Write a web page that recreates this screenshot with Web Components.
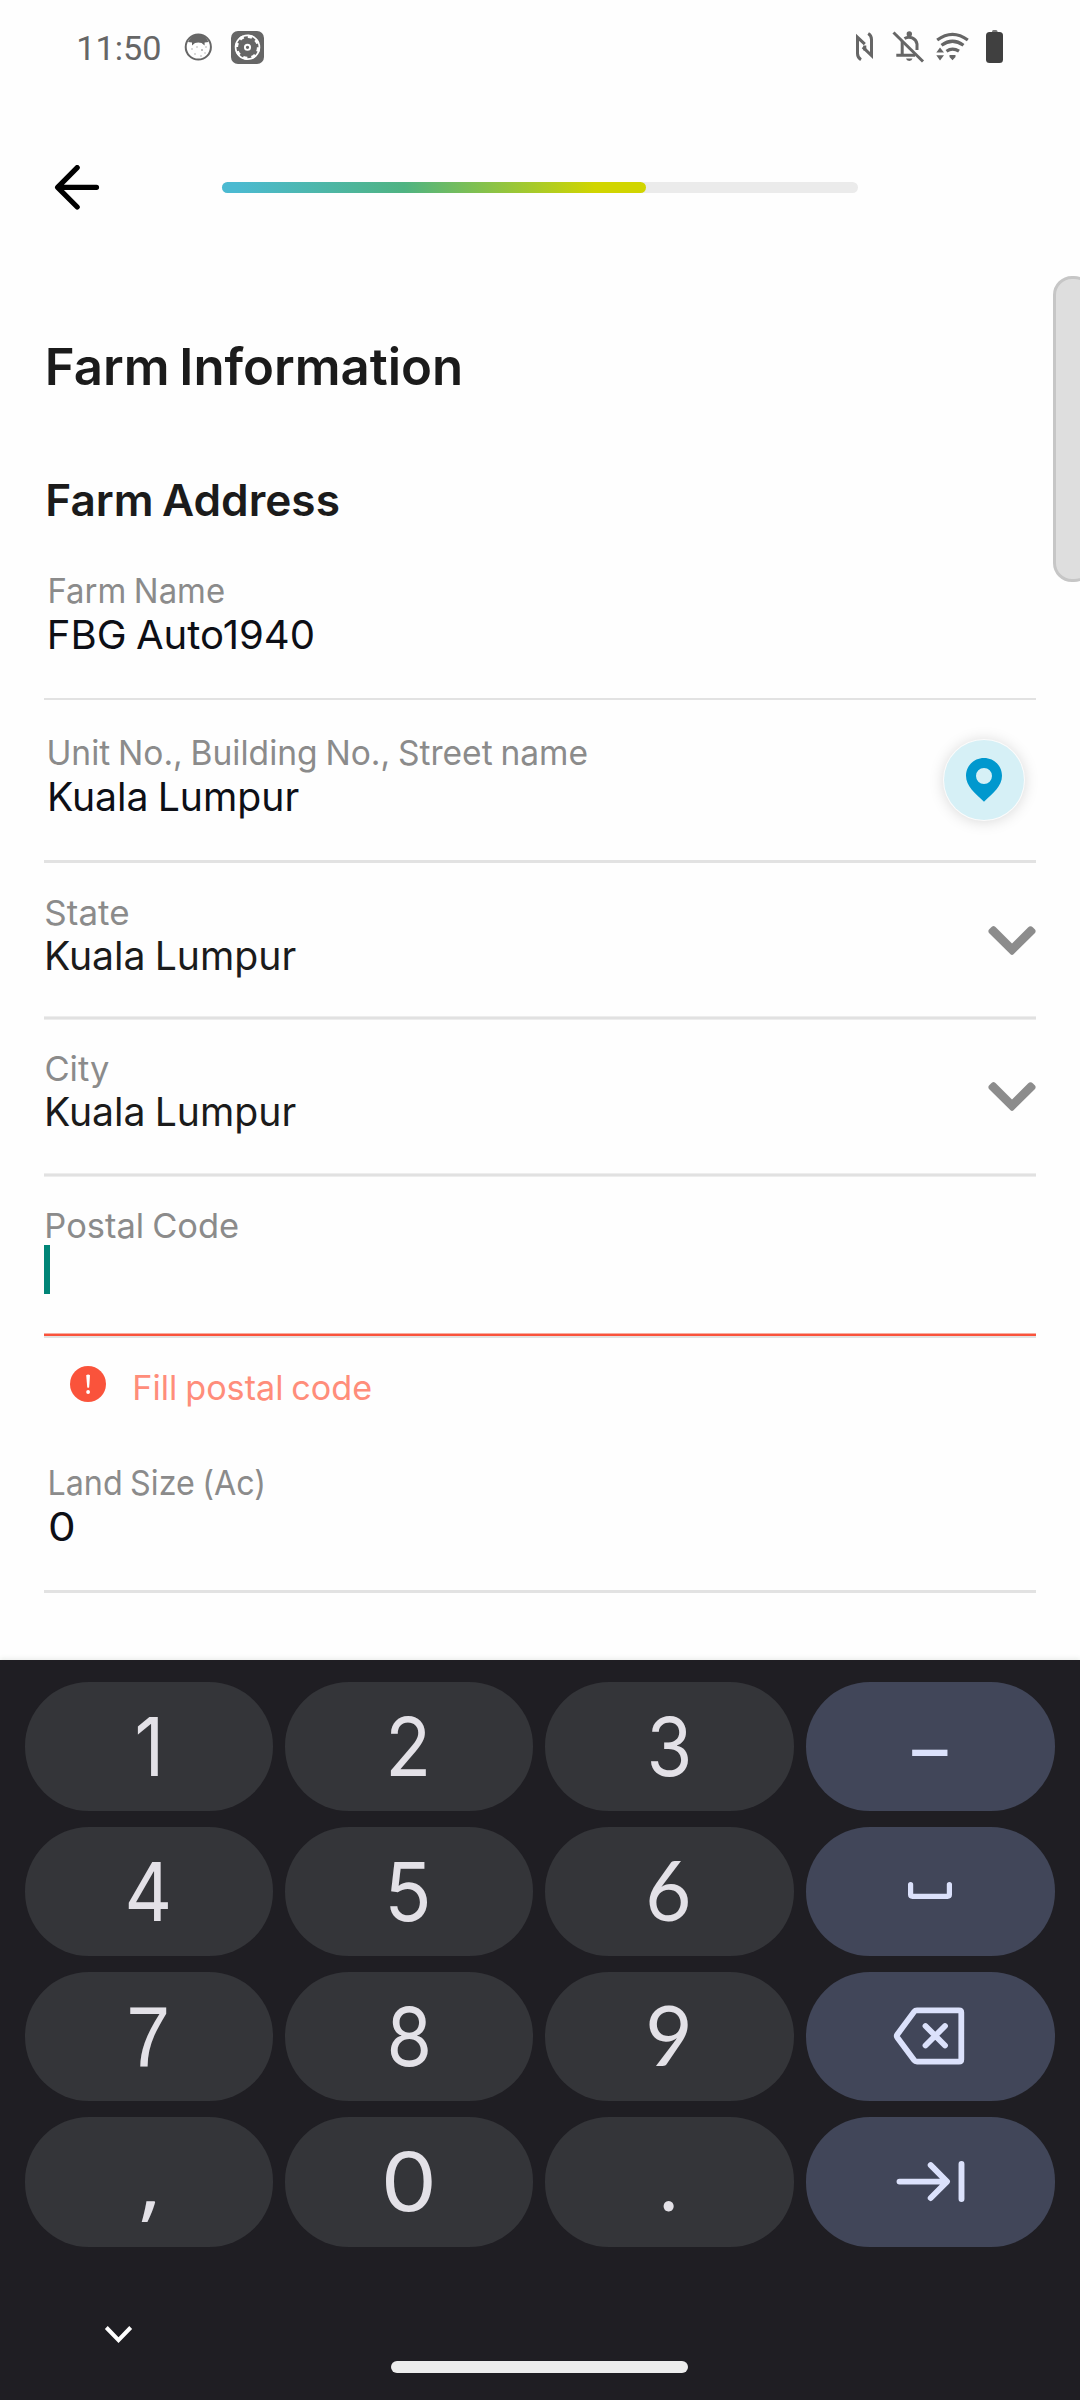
<!DOCTYPE html>
<html lang="en">
<head>
<meta charset="utf-8">
<title>Farm Information</title>
<style>
html,body{margin:0;padding:0;background:#fefefe}
body{width:1080px;height:2400px;overflow:hidden;font-family:Inter,"Noto Sans",sans-serif}
</style>
</head>
<body>
<farm-screen></farm-screen>
<script>
const define=(name,html,init)=>customElements.define(name,class extends HTMLElement{
  connectedCallback(){
    if(this.shadowRoot)return;
    const root=this.attachShadow({mode:'open'});
    const t=document.createElement('template');
    t.innerHTML=typeof html==='function'?html(this):html;
    root.append(t.content.cloneNode(true));
    if(init)init(this,root);
  }
});
const ctx=document.createElement('canvas').getContext('2d');

// Text whose box is its ink width by its cap height, so that rows can align on caps.
define('fit-text',e=>`<style>:host{display:block;flex:none}span{display:block;width:max-content;white-space:pre;transform-origin:0 0}</style><span></span>`,(e,root)=>{
  const s=root.querySelector('span'),text=e.getAttribute('text'),w=+e.getAttribute('w'),cap=+e.getAttribute('cap');
  const fam=`"${e.getAttribute('font')||'Inter'}"`,wt=e.getAttribute('weight')||400,ws=+(e.getAttribute('ws')||-.05);
  // Measured at 1000px, where rounding of the bounds is negligible.
  ctx.font=`${wt} 1000px ${fam}, sans-serif`;
  const r=cap/ctx.measureText('H').actualBoundingBoxAscent,size=r*1000;
  const m=ctx.measureText(text);
  const ink=(m.actualBoundingBoxLeft+m.actualBoundingBoxRight)*r+(text.split(' ').length-1)*ws*size,k=w/ink;
  s.textContent=text;
  e.style.width=w+'px';e.style.height=cap+'px';
  s.style.cssText=`font:${wt} ${size}px/${cap}px ${fam},sans-serif;word-spacing:${ws}em;color:${e.getAttribute('color')||'inherit'}`;
  ctx.font=`${wt} ${size}px ${fam}, sans-serif`;
  const f=ctx.measureText(text),base=(cap+f.fontBoundingBoxAscent-f.fontBoundingBoxDescent)/2;
  s.style.transform=`translate(${m.actualBoundingBoxLeft*r*k}px,${cap-base}px) scaleX(${k})`;
});

define('status-bar',`<style>
:host{display:flex;height:94px;box-sizing:border-box;padding:0 76px 0 79px;align-items:flex-start;color:#666}
fit-text{margin-top:37px}svg{display:block;flex:none}.g{flex:1}
</style>
<fit-text text="11:50" w="81" cap="23.3" font="Roboto" weight="400"></fit-text>
<svg style="margin:32px 0 0 23px" width="30" height="30" viewBox="183 32 30 30"><circle cx="198.3" cy="47" r="12.6" fill="#fff" stroke="#666" stroke-width="2"/><path d="M188 42q3-7 10.300-8q7 1 10.300 8l-4 .5v3l-3-2.500q-3.300-1-6.600 0l-3 2.500v-3z" fill="#666"/><g fill="#aaa"><circle cx="192" cy="49" r=".8"/><circle cx="197" cy="47" r=".8"/><circle cx="202" cy="50" r="1"/><circle cx="206" cy="47" r=".8"/><circle cx="195" cy="54" r=".8"/><circle cx="201" cy="56" r=".8"/><circle cx="205" cy="53" r=".7"/></g></svg>
<svg style="margin:31px 0 0 18px" width="33" height="33" viewBox="0 0 33 33"><rect width="33" height="33" rx="7" fill="#666"/><circle cx="16.500" cy="16.300" r="11.900" fill="none" stroke="#fff" stroke-width="1.700"/><g fill="none" stroke="#fff" stroke-width="3.200" stroke-dasharray="4.400 4.240"><circle cx="16.500" cy="16.300" r="11"/></g><circle cx="16.500" cy="16.300" r="2.600" fill="none" stroke="#fff" stroke-width="1.900"/></svg>
<span class="g"></span>
<svg style="margin-top:30px" width="149" height="36" viewBox="855 30 149 36" fill="none" stroke="#666">
<g stroke-width="3"><path d="M861 59.700Q857.500 57.500 857.500 53.500V37.300L864.800 44.200M864.800 50.500V45.500"/><path d="M868.200 33.500Q871.500 35.500 871.500 39.500V55.500L862.800 47.200"/></g>
<g><path d="M902.200 41V54M896.300 55.300H915" stroke-width="3"/><path d="M904.500 38.500A8.200 8.200 0 0 1 917 44V50" stroke-width="3"/><circle cx="909.300" cy="34" r="2.700" fill="#666" stroke="none"/><path d="M906 58.500H912.500A3.300 3 0 0 1 906 58.500Z" fill="#666" stroke="none"/><path d="M893.500 32.500L923 61.500" stroke-width="3"/></g>
<g stroke-width="3.200"><path d="M937.200 40Q952.500 28.700 967.800 40M941.500 45.300Q952.500 37.200 963.500 45.300M946.500 51.200Q952.500 47 959 51.200"/></g><path d="M949.500 55H955.500V57L952.500 60.300L949.500 57ZM936.300 52.500L940 47.500L944 52.500ZM936.300 55.300H944L940 60.500Z" fill="#666" stroke="none"/>
<path d="M992 33V31.500Q992 30 993.500 30H996Q997.500 30 997.500 31.500V33Z" fill="#777" stroke="none"/><rect x="986" y="32" width="17" height="31" rx="3.500" fill="#404040" stroke="none"/></svg>`);

define('top-bar',`<style>
:host{display:flex;height:154px;box-sizing:border-box;padding:71px 0 0 54px}
svg{display:block}.t{margin:17px 0 0 122px;width:636px;height:11px;border-radius:6px;background:#ebebeb}
.f{width:424px;height:11px;border-radius:6px;background:linear-gradient(90deg,#4bbad1 3%,#4fb382 43%,#d1d500 88%)}
</style><svg width="46" height="45" viewBox="0 0 46 45" fill="none" stroke="#000" stroke-width="5.200" stroke-linecap="round" stroke-linejoin="round"><path d="M23.200 2.600L3.600 22.300L23.200 42M4 22.300H42.500"/></svg>
<div class="t"><div class="f"></div></div>`);

define('form-field',e=>{const g=n=>e.getAttribute(n);return `<style>
:host{display:flex;flex-direction:column;box-sizing:border-box;height:${g('h')}px}
.r{display:flex;flex:1}.c{flex:1;padding-top:${g('pad')}px}
.v{margin-top:${g('gap')}px}
.line{flex:none;height:${g('lh')}px;background:${g('line')||'#e2e2e2'}}
</style><div class="r"><div class="c"><fit-text style="margin-left:${g('li')}px" text="${g('label')}" w="${g('lw')}" cap="25" color="#8b8b8b"></fit-text>
<div class="v">${g('value')?`<fit-text style="margin-left:${g('vi')}px" text="${g('value')}" w="${g('vw')}" cap="29" color="${g('color')||'#0d0f16'}"></fit-text>`:'<slot></slot>'}</div></div><slot name="icon"></slot></div><div class="line"></div>`});

define('text-caret','<style>:host{display:block;width:6px;height:49px;background:#018577}</style>');
define('map-pin',`<style>:host{display:flex;justify-content:center;width:80px;height:80px;margin:40px 12px 0 0;border-radius:50%;background:#d6f0f6;box-shadow:0 0 0 1px #fbfbfb,0 1px 15px rgba(0,0,0,.17)}svg{margin-top:18px}</style><svg width="36" height="44" viewBox="0 0 36 44"><path fill="#0098ce" fill-rule="evenodd" d="M18 0C8 0 0 7.800 0 17.800C0 28 9 35.500 18 43.700C27 35.500 36 28 36 17.800C36 7.800 28 0 18 0ZM18 10A8 8 0 1 1 18 26A8 8 0 1 1 18 10Z"/></svg>`);
define('drop-chevron',`<style>:host{display:block}svg{display:block}</style><svg width="48" height="30" viewBox="988 926 48 30"><path d="M993.500 926Q995 926.300 996 927.500L1012 943.500L1028 927.500Q1030.500 925 1033 927.500L1035 929.500Q1036.500 931.500 1034.500 933.500L1013.500 954.300Q1012 955.700 1010.500 954.300L989.500 933.500Q987.500 931.500 989 929.500L991 927.500Q992 926.200 993.500 926Z" fill="#8c8c8c"/></svg>`);

define('error-note',`<style>:host{display:flex;height:92px;padding:28px 0 0 26px;box-sizing:border-box}svg{display:block}fit-text{margin:9px 0 0 28.700px}</style>
<svg width="36" height="36" viewBox="0 0 36 36"><circle cx="18" cy="18" r="18" fill="#fa533b"/><path d="M16.200 9.300Q18.200 7.500 20 9.300L19.200 21.200Q18.200 22.500 17.200 21.200Z" fill="#fff"/><circle cx="18.100" cy="26" r="1.900" fill="#fff"/></svg>
<fit-text text="Fill postal code" w="236" cap="25" color="#ff8d7a" weight="370"></fit-text>`);

define('num-key',e=>{const g=n=>e.getAttribute(n);return `<style>
:host{display:flex;align-items:center;justify-content:center;border-radius:64px;background:#343539;color:#e3e1e7}
:host([alt]){background:#414659;color:#dbe1fb}
</style>${g('text')?`<fit-text text="${g('text')}" w="${g('w')}" cap="${g('cap')||60}" font="${g('font')||'Inter'}" style="margin-top:${g('drop')||-2}px;margin-right:1px"></fit-text>`:'<slot></slot>'}`});

define('num-pad',`<style>
:host{display:block;height:740px;box-sizing:border-box;padding:22px 25px 0;background:#1f1e23;box-shadow:0 -1px 5px rgba(60,80,60,.12)}
.k{display:grid;grid-template:129px 129px 129px 130px/248px 248px 249px 249px;gap:16px 12px}
.n{display:flex;padding-top:79px}.n svg{margin-left:79px}.pill{margin:35px 0 0 258px;width:297px;height:12px;border-radius:6px;background:#ededed}
svg{display:block;fill:none;stroke:#dbe1fb;stroke-linecap:round;stroke-linejoin:round}
</style><div class="k">
<num-key text="1" w="20.500"></num-key><num-key text="2" w="36.500"></num-key><num-key text="3" w="38.300"></num-key><num-key alt text="–" w="36" font="Roboto" drop="13"></num-key>
<num-key text="4" w="40.300"></num-key><num-key text="5" w="39"></num-key><num-key text="6" w="39.700" font="Lato"></num-key>
<num-key alt><svg width="44" height="18" viewBox="0 0 44 18" style="margin:-1px 1px 0 0" stroke-width="5.200"><path d="M2.600 2.600V12.500Q2.600 14.300 4.500 14.300H39.500Q41.400 14.300 41.400 12.500V2.600"/></svg></num-key>
<num-key text="7" w="37" font="Liberation Sans"></num-key><num-key text="8" w="38"></num-key><num-key text="9" w="39.700" font="Lato"></num-key>
<num-key alt><svg width="72" height="60" viewBox="893 2006 72 60" stroke-width="5.800" style="margin:-1px 4px 0 0"><path d="M917 2010.300H959Q961.300 2010.300 961.300 2012.500V2059.500Q961.300 2061.600 959 2061.600H917Q915.200 2061.600 914.200 2060.300L897.300 2037.500Q896.200 2036 897.300 2034.500L914.200 2011.600Q915.200 2010.300 917 2010.300ZM925.500 2026L945 2045.500M945 2026L925.500 2045.500"/></svg></num-key>
<num-key text="," w="14.500" font="Open Sans"></num-key><num-key text="0" w="47.300"></num-key><num-key text="." w="11.200" font="Lato"></num-key>
<num-key alt><svg width="70" height="44" viewBox="895 2160 70 44" stroke-width="5.900" style="margin-right:1px"><path d="M899.500 2181.600H946M930.700 2165.200L947 2181.600L930.700 2198M961.500 2164V2199"/></svg></num-key>
</div><div class="n"><svg width="29" height="19" viewBox="0 0 29 19" style="stroke:#fff;stroke-linecap:butt;stroke-linejoin:miter;stroke-width:4"><path d="M2.300 1.500L14.500 14.200L26.700 1.500"/></svg><div class="pill"></div></div>`);

define('edge-handle','<style>:host{position:absolute;left:1053px;top:276px;width:40px;height:306px;box-sizing:border-box;border:3px solid #c6c6c6;border-radius:19px;background:#dedede}</style>');

define('farm-screen',`<style>
:host{display:flex;flex-direction:column;position:relative;width:1080px;height:2400px;overflow:hidden;background:#fefefe;color:#1b1b1b}
main{flex:1;padding:100px 44px 0}
</style>
<status-bar></status-bar><top-bar></top-bar>
<main>
<fit-text style="margin-left:3.500px" text="Farm Information" w="412" cap="37" weight="600" ws="-.06"></fit-text>
<fit-text style="margin:99px 0 0 3.500px" text="Farm Address" w="290.500" cap="32" weight="600" ws="-.06"></fit-text>
<form-field h="184" pad="62" gap="17" lh="2" label="Farm Name" li="5.600" lw="174" value="FBG Auto1940" vi="6" vw="263"></form-field>
<form-field h="163" pad="40" gap="17" lh="3" label="Unit No., Building No., Street name" li="5.100" lw="538" value="Kuala Lumpur" vi="6" vw="248.700"><map-pin slot="icon"></map-pin></form-field>
<form-field h="157" pad="37" gap="16" lh="4" line="linear-gradient(#ededed 1px,#e1e1e1 1px 3px,#ededed 3px)" label="State" li="1.900" lw="82.300" value="Kuala Lumpur" vi="2.700" vw="248.700" color="#1b1b1b"><drop-chevron slot="icon" style="margin-top:63px"></drop-chevron></form-field>
<form-field h="157" pad="36" gap="16" lh="4" line="linear-gradient(#ededed 1px,#e1e1e1 1px 3px,#ededed 3px)" label="City" li="1.900" lw="62.800" value="Kuala Lumpur" vi="2.700" vw="248.700" color="#1b1b1b"><drop-chevron slot="icon" style="margin-top:62px"></drop-chevron></form-field>
<form-field h="161" pad="36" gap="7" lh="5" line="linear-gradient(#f7ab9f 1px,#fa533b 1px 3px,#e2e2e2 3px)" label="Postal Code" li="2.800" lw="191"><text-caret></text-caret></form-field>
<error-note></error-note>
<form-field h="163" pad="40" gap="17" lh="3" label="Land Size (Ac)" li="5.700" lw="213" value="0" vi="5.700" vw="23.300"></form-field>
</main>
<num-pad></num-pad><edge-handle></edge-handle>`);
</script>
</body>
</html>
